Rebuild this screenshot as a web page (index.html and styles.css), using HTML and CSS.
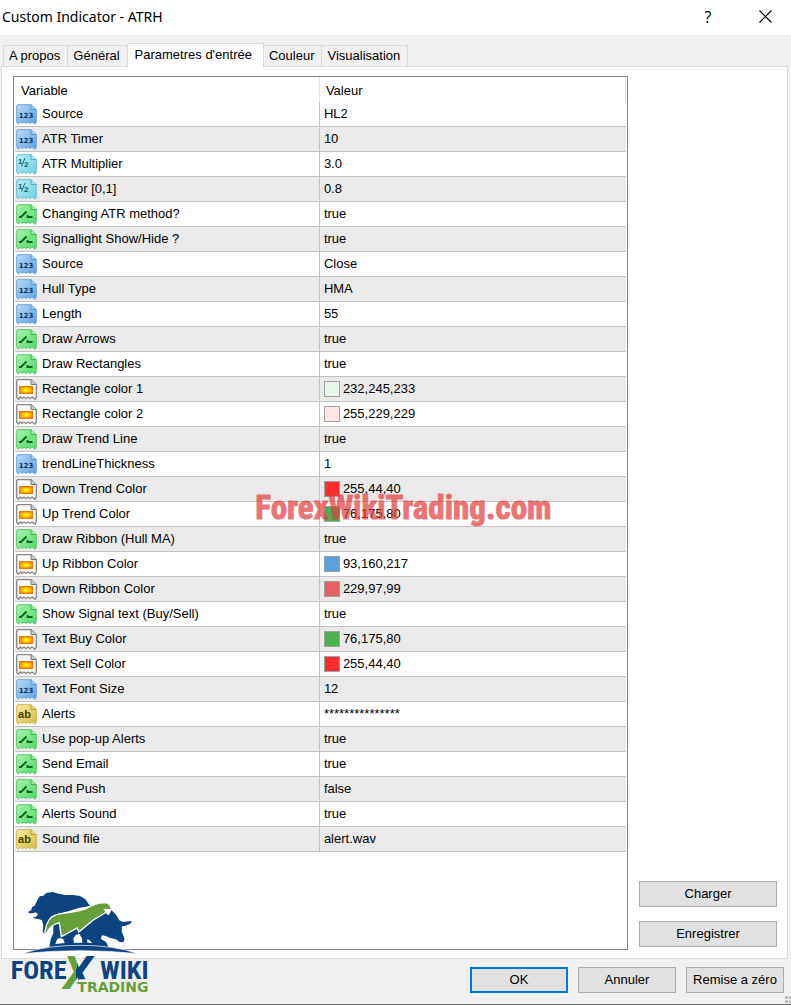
FILE: index.html
```html
<!DOCTYPE html>
<html lang="fr">
<head>
    <meta charset="UTF-8" />
    <meta name="viewport" content="width=device-width, initial-scale=1" />
    <title>Custom Indicator - ATRH</title>
    <link rel="stylesheet" href="styles.css">
</head>
<body>
    <!-- row icons -->
    <svg class="sprite" aria-hidden="true">
        <defs>
            <linearGradient id="g-blue" x1="0" y1="0" x2="1" y2="1"><stop offset="0" stop-color="#b5dcfb" /><stop offset="1" stop-color="#5f9cdc" /></linearGradient>
            <linearGradient id="g-cyan" x1="0" y1="0" x2="1" y2="1"><stop offset="0" stop-color="#b4f0f6" /><stop offset="1" stop-color="#6fcde0" /></linearGradient>
            <linearGradient id="g-green" x1="0" y1="0" x2="1" y2="1"><stop offset="0" stop-color="#a6f5a6" /><stop offset="1" stop-color="#4fd968" /></linearGradient>
            <linearGradient id="g-gold" x1="0" y1="0" x2="1" y2="1"><stop offset="0" stop-color="#f5eb9c" /><stop offset="1" stop-color="#d3bd48" /></linearGradient>
            <radialGradient id="g-fire"><stop offset="0.2" stop-color="#fff200" /><stop offset="1" stop-color="#ff8a00" /></radialGradient>
            <path id="sheet" d="M1.5 .7H15L20.300 5.5V18L19 20.300L17.500 19L16 18L14 19.500L12 18L10 19.500L8 18L6 19.500L4.5 18L2.5 20L.7 18.500V2Z" />
            <path id="fold" d="M15 .7V5.5H20.300" />
        </defs>
        <symbol id="i-int" viewBox="0 0 21 21">
            <use href="#sheet" fill="url(#g-blue)" stroke="#70a5d8" />
            <use href="#fold" fill="#9ccbf3" stroke="#6097cf" />
            <text class="ico-num" x="10" y="14" fill="#08366b">123</text>
        </symbol>
        <symbol id="i-dbl" viewBox="0 0 21 21">
            <use href="#sheet" fill="url(#g-cyan)" stroke="#6fc3d2" />
            <use href="#fold" fill="#a3e6ef" stroke="#56afc2" />
            <text class="ico-frac" x="2" y="10" fill="#116476">1</text>
            <path d="M5.500 12.500L9 4" stroke="#116476" fill="none" />
            <text class="ico-frac" x="8" y="13" fill="#116476">2</text>
        </symbol>
        <symbol id="i-bool" viewBox="0 0 21 21">
            <use href="#sheet" fill="url(#g-green)" stroke="#5cc870" />
            <use href="#fold" fill="#92ec98" stroke="#43b45a" />
            <path d="M3 13H5L10.500 7.500M11.500 11V13H16.500" stroke="#0c6421" stroke-width="1.800" fill="none" />
        </symbol>
        <symbol id="i-color" viewBox="0 0 21 21">
            <use href="#sheet" fill="#fbfbfb" stroke="#858585" stroke-width="1.300" />
            <use href="#fold" fill="#ccc" stroke="#777" />
            <rect x="3.500" y="7.500" width="13" height="7" fill="url(#g-fire)" stroke="#f07800" />
        </symbol>
        <symbol id="i-str" viewBox="0 0 21 21">
            <use href="#sheet" fill="url(#g-gold)" stroke="#cdb850" />
            <use href="#fold" fill="#e6d678" stroke="#b7a13b" />
            <text class="ico-str" x="8.500" y="14" fill="#4a3f00">ab</text>
        </symbol>
    </svg>

    <div class="window">
        <header class="titlebar">
            <h1>Custom Indicator - ATRH</h1>
            <button type="button" class="tb-btn" aria-label="Aide">?</button>
            <button type="button" class="tb-btn" aria-label="Fermer">
                <svg width="13" height="13" viewBox="0 0 13 13"><path d="M.5 .5L12.500 12.500M12.500 .5L.5 12.500" stroke="#000" stroke-width="1.200" fill="none" /></svg>
            </button>
        </header>

        <div class="tabs" role="tablist">
            <button type="button" role="tab" class="tab">A propos</button>
            <button type="button" role="tab" class="tab">Général</button>
            <button type="button" role="tab" class="tab current" aria-selected="true">Parametres d'entrée</button>
            <button type="button" role="tab" class="tab">Couleur</button>
            <button type="button" role="tab" class="tab">Visualisation</button>
        </div>

        <main class="panel">
            <div class="list">
                <table class="params">
                    <thead>
                        <tr><th class="col-name">Variable</th><th>Valeur</th></tr>
                    </thead>
                    <tbody>
                        <tr><td><svg class="ico"><use href="#i-int" /></svg>Source</td><td>HL2</td></tr>
                        <tr><td><svg class="ico"><use href="#i-int" /></svg>ATR Timer</td><td>10</td></tr>
                        <tr><td><svg class="ico"><use href="#i-dbl" /></svg>ATR Multiplier</td><td>3.0</td></tr>
                        <tr><td><svg class="ico"><use href="#i-dbl" /></svg>Reactor [0,1]</td><td>0.8</td></tr>
                        <tr><td><svg class="ico"><use href="#i-bool" /></svg>Changing ATR method?</td><td>true</td></tr>
                        <tr><td><svg class="ico"><use href="#i-bool" /></svg>Signallight Show/Hide ?</td><td>true</td></tr>
                        <tr><td><svg class="ico"><use href="#i-int" /></svg>Source</td><td>Close</td></tr>
                        <tr><td><svg class="ico"><use href="#i-int" /></svg>Hull Type</td><td>HMA</td></tr>
                        <tr><td><svg class="ico"><use href="#i-int" /></svg>Length</td><td>55</td></tr>
                        <tr><td><svg class="ico"><use href="#i-bool" /></svg>Draw Arrows</td><td>true</td></tr>
                        <tr><td><svg class="ico"><use href="#i-bool" /></svg>Draw Rectangles</td><td>true</td></tr>
                        <tr><td><svg class="ico"><use href="#i-color" /></svg>Rectangle color 1</td><td><span class="swatch mint"></span>232,245,233</td></tr>
                        <tr><td><svg class="ico"><use href="#i-color" /></svg>Rectangle color 2</td><td><span class="swatch pink"></span>255,229,229</td></tr>
                        <tr><td><svg class="ico"><use href="#i-bool" /></svg>Draw Trend Line</td><td>true</td></tr>
                        <tr><td><svg class="ico"><use href="#i-int" /></svg>trendLineThickness</td><td>1</td></tr>
                        <tr><td><svg class="ico"><use href="#i-color" /></svg>Down Trend Color</td><td><span class="swatch red"></span>255,44,40</td></tr>
                        <tr><td><svg class="ico"><use href="#i-color" /></svg>Up Trend Color</td><td><span class="swatch green"></span>76,175,80</td></tr>
                        <tr><td><svg class="ico"><use href="#i-bool" /></svg>Draw Ribbon (Hull MA)</td><td>true</td></tr>
                        <tr><td><svg class="ico"><use href="#i-color" /></svg>Up Ribbon Color</td><td><span class="swatch blue"></span>93,160,217</td></tr>
                        <tr><td><svg class="ico"><use href="#i-color" /></svg>Down Ribbon Color</td><td><span class="swatch rose"></span>229,97,99</td></tr>
                        <tr><td><svg class="ico"><use href="#i-bool" /></svg>Show Signal text (Buy/Sell)</td><td>true</td></tr>
                        <tr><td><svg class="ico"><use href="#i-color" /></svg>Text Buy Color</td><td><span class="swatch green"></span>76,175,80</td></tr>
                        <tr><td><svg class="ico"><use href="#i-color" /></svg>Text Sell Color</td><td><span class="swatch red"></span>255,44,40</td></tr>
                        <tr><td><svg class="ico"><use href="#i-int" /></svg>Text Font Size</td><td>12</td></tr>
                        <tr><td><svg class="ico"><use href="#i-str" /></svg>Alerts</td><td>***************</td></tr>
                        <tr><td><svg class="ico"><use href="#i-bool" /></svg>Use pop-up Alerts</td><td>true</td></tr>
                        <tr><td><svg class="ico"><use href="#i-bool" /></svg>Send Email</td><td>true</td></tr>
                        <tr><td><svg class="ico"><use href="#i-bool" /></svg>Send Push</td><td>false</td></tr>
                        <tr><td><svg class="ico"><use href="#i-bool" /></svg>Alerts Sound</td><td>true</td></tr>
                        <tr><td><svg class="ico"><use href="#i-str" /></svg>Sound file</td><td>alert.wav</td></tr>
                    </tbody>
                </table>
            </div>
            <div class="side">
                <button type="button" class="btn">Charger</button>
                <button type="button" class="btn">Enregistrer</button>
            </div>
        </main>

        <footer class="actions">
            <button type="button" class="btn primary">OK</button>
            <button type="button" class="btn">Annuler</button>
            <button type="button" class="btn">Remise a zéro</button>
        </footer>

        <svg class="grip" viewBox="0 0 7 8" aria-hidden="true"><path d="M1 0h3v3h-3zM5 0h2v3h-2zM1 4h3v3h-3zM5 4h2v3h-2z" fill="#bfbfbf" /></svg>
        <div class="watermark">ForexWikiTrading.com</div>

        <svg class="logo" viewBox="0 0 510 405" role="img" aria-label="Forex Wiki Trading">
            <defs>
                <linearGradient id="g-x" x1="0" y1="0" x2="1" y2="0.15"><stop offset="0.5" stop-color="#679f38" /><stop offset="0.5" stop-color="#0b4480" /></linearGradient>
                <clipPath id="c-x"><path d="M180 240H310V328H238L228 370H180Z" /></clipPath>
            </defs>
            <!-- bear -->
            <path fill="#0b4480" d="M84 126L94 120L96 112L104 107L114 86L120 79L130 77L138 69L158 66L176 71L196 75L220 75L240 78L256 88L270 108L235 114L205 124L180 130L160 140L145 156L137 175L135 196L128 184L130 166L126 151L118 148L108 146L98 143L110 139L114 132L106 127L98 130L88 130Z" />
            <!-- bull -->
            <path fill="#0b4480" d="M334 120L348 134L358 151L368 156L388 154L396 154L390 162L374 168L366 169L365 184L374 208L370 216L360 217L348 208L330 204L318 198L306 196L302 206L318 216L326 232L148 232L152 208L160 190L160 160L190 150L276 140L318 125Z" />
            <path fill="#fff" d="M166 222L172 206L180 204L190 208L194 219ZM222 219L220 205L228 194L238 192L246 204L247 218ZM262 207L272 213L276 219L262 218Z" />
            <!-- arrow -->
            <path fill="#679f38" stroke="#fff" stroke-width="4" d="M134 204Q134 160 154 142Q168 132 190 130Q230 125 258 116Q286 98 318 98Q332 102 334 116L326 132L320 126L280 150L236 186L232 174L184 200L178 158L166 162Q144 172 134 204Z" />
            <path fill="#fff" d="M310 116L334 118L322 135Z" />
            <!-- ground -->
            <path fill="#0b4480" stroke="#fff" stroke-width="2" d="M68 251Q136 226 240 226Q344 226 414 251Q330 242 240 242Q150 242 68 251Z" />
            <text class="logo-word" x="32" y="327">FORE</text>
            <text class="logo-x" x="190" y="357" fill="url(#g-x)" clip-path="url(#c-x)">X</text>
            <text class="logo-word" x="300" y="327">WIKI</text>
            <text class="logo-sub" x="232" y="366">TRADING</text>
        </svg>
    </div>
</body>
</html>
```
FILE: styles.css
```css
* {
    margin: 0;
    padding: 0;
    box-sizing: border-box;
}
body {
    font: 13px/16px "Liberation Sans", Arial, sans-serif;
    color: #000;
    background-color: #f0f0f0;
}
button {
    font: inherit;
    color: inherit;
}
.sprite {
    position: absolute;
    width: 0;
    height: 0;
}
.window {
    position: relative;
    display: flex;
    flex-direction: column;
    min-height: 100vh;
    border-bottom: 1px solid #666;
}

/* title bar */
.titlebar {
    display: flex;
    align-items: center;
    height: 35px;
    padding: 0 4px 2px 2px;
    background-color: #fff;
}
.titlebar h1 {
    flex: 1;
    font: 14px/20px "Noto Sans", "Open Sans", sans-serif;
}
.tb-btn {
    display: flex;
    align-items: center;
    justify-content: center;
    width: 44px;
    height: 32px;
    margin-left: 13px;
    border: none;
    background: none;
    font: 16px/20px "Open Sans", sans-serif;
}

/* tabs */
.tabs {
    display: flex;
    align-items: flex-end;
    padding: 8px 3px 0;
}
.tab {
    height: 21px;
    padding: 0 7px 0 5px;
    border: 1px solid #d9d9d9;
    border-bottom: none;
    border-left: none;
    background-color: #f0f0f0;
    white-space: nowrap;
}
.tab:first-child {
    border-left: 1px solid #d9d9d9;
}
.tab.current {
    position: relative;
    height: 24px;
    margin-bottom: -1px;
    padding: 0 11px 2px 7px;
    background-color: #fff;
}

/* panel */
.panel {
    flex: 1;
    display: flex;
    gap: 11px;
    margin: 0 3px 0 1px;
    padding: 9px 10px 8px 11px;
    border: 1px solid #d9d9d9;
    background-color: #fff;
}
.list {
    flex: 1;
    padding: 0 1px;
    border: 1px solid #828790;
}
.params {
    width: 100%;
    table-layout: fixed;
    border-collapse: separate;
    border-spacing: 0;
}
.params th {
    height: 25px;
    padding: 2px 6px 0;
    border-right: 1px solid #e5e5e5;
    font-weight: normal;
    text-align: left;
}
.params .col-name {
    width: 49.9%;
}
.params td {
    height: 25px;
    padding: 0 4px;
    border-bottom: 1px solid #c3c3c3;
    white-space: nowrap;
}
.params td:first-child {
    padding-left: 1px;
    border-right: 1px solid #c3c3c3;
}
.params tbody tr:nth-child(even) {
    background-color: #eaeaea;
}
.ico {
    width: 21px;
    height: 21px;
    margin-right: 5px;
    vertical-align: middle;
}
.ico-num {
    font: bold 7px "DejaVu Sans", sans-serif;
    text-anchor: middle;
}
.ico-frac {
    font: bold 8px "Liberation Sans", sans-serif;
}
.ico-str {
    font: bold 11px "Liberation Sans", sans-serif;
    text-anchor: middle;
}
.swatch {
    display: inline-block;
    width: 16px;
    height: 16px;
    margin-right: 3px;
    border: 1px solid #a0a0a0;
    vertical-align: middle;
}
.mint { background-color: rgb(232,245,233); }
.pink { background-color: rgb(255,229,229); }
.red { background-color: rgb(255,44,40); }
.green { background-color: rgb(76,175,80); }
.blue { background-color: rgb(93,160,217); }
.rose { background-color: rgb(229,97,99); }

/* buttons */
.btn {
    height: 26px;
    border: 1px solid #adadad;
    background-color: #e1e1e1;
    white-space: nowrap;
}
.btn.primary {
    border: 2px solid #0078d7;
}
.side {
    display: flex;
    flex-direction: column;
    justify-content: flex-end;
    gap: 14px;
    width: 138px;
    padding-bottom: 3px;
}
.actions {
    display: flex;
    justify-content: flex-end;
    gap: 10px;
    padding: 8px 7px 11px;
}
.actions .btn {
    width: 98px;
}

/* overlays */
.grip {
    position: absolute;
    right: 0;
    bottom: 0;
    width: 7px;
    height: 8px;
}
.watermark {
    position: absolute;
    top: 50%;
    left: 51%;
    transform: translate(-50%, -35%);
    font: bold 33px/40px "Roboto Condensed", Roboto, "Liberation Sans", sans-serif;
    color: #e03c3c;
    -webkit-text-stroke: 1px #e03c3c;
    opacity: .7;
    pointer-events: none;
}
.logo {
    position: absolute;
    left: 0;
    bottom: -1px;
    width: 170px;
    height: 135px;
    pointer-events: none;
}
.logo-word {
    font: bold 79px "Roboto Condensed", Roboto, sans-serif;
    fill: #0b4480;
}
.logo-x {
    font: italic bold 140px Roboto, "Liberation Sans", sans-serif;
}
.logo-sub {
    font: bold 42px "DejaVu Sans", sans-serif;
    fill: #679f38;
}
```
